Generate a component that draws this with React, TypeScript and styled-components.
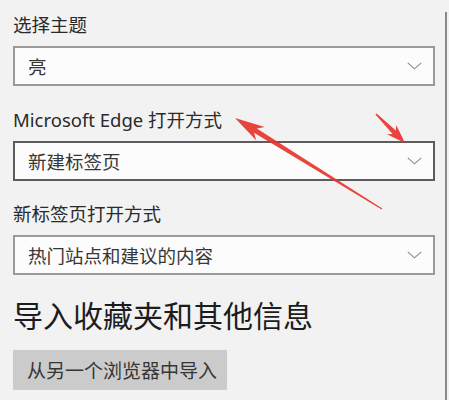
import React from "react";
import styled, { createGlobalStyle } from "styled-components";

const GlobalStyle = createGlobalStyle`
  html, body { margin: 0; padding: 0; }
  body {
    background: #f2f2f2;
    font-family: "Noto Sans", "Noto Sans CJK SC", sans-serif;
    overflow: hidden;
  }
`;

const Page = styled.div`
  position: relative;
  width: 449px;
  height: 400px;
  display: flex;
  background: #f2f2f2;
  overflow: hidden;
`;

const Content = styled.div`
  width: 422px;
  padding: 13px 0 0 13px;
  display: flex;
  flex-direction: column;
`;

const ScrollTrack = styled.div`
  margin: 12px 0 0 10px;
  width: 2px;
  flex: none;
  background: #8a8a8a;
`;

const Section = styled.div`
  display: flex;
  flex-direction: column;
  margin-bottom: ${(p: { $gap: number }) => p.$gap}px;
`;

const Label = styled.div`
  font-size: 18.5px;
  line-height: 24px;
  height: 24px;
  color: #2a2a2a;
  margin-bottom: 9px;
  white-space: nowrap;
`;

const Select = styled.div<{ $active?: boolean }>`
  box-sizing: border-box;
  height: 40px;
  width: 422px;
  border: 2px solid ${(p) => (p.$active ? "#5c5c5c" : "#9a9a9a")};
  background: #fcfcfc;
  display: flex;
  align-items: center;
  justify-content: space-between;
  padding: 0 11px 0 13px;
`;

const SelectText = styled.span`
  font-size: 18.5px;
  color: #363636;
  white-space: nowrap;
`;

const Heading = styled.div`
  font-size: 30px;
  line-height: 40px;
  color: #1c1c1c;
  margin-bottom: 14px;
  white-space: nowrap;
`;

const Button = styled.div`
  box-sizing: border-box;
  width: 214px;
  height: 40px;
  background: #cbcbcb;
  display: flex;
  align-items: center;
  padding-left: 14px;
  font-size: 19px;
  color: #363636;
  white-space: nowrap;
`;

const Overlay = styled.svg`
  position: absolute;
  left: 0;
  top: 0;
  pointer-events: none;
`;

const Chevron = () => (
  <svg width="15" height="8" viewBox="0 0 15 8">
    <polyline points="0.8,0.8 7.5,6.8 14.2,0.8" fill="none" stroke="#8c8c8c" strokeWidth="1.1" />
  </svg>
);

function arrowPoints(tx: number, ty: number, hx: number, hy: number, headLen: number, headHalf: number, tailW: number, shaftW: number) {
  const dx = hx - tx;
  const dy = hy - ty;
  const len = Math.hypot(dx, dy);
  const ux = dx / len;
  const uy = dy / len;
  const nx = -uy;
  const ny = ux;
  const bx = hx - ux * headLen;
  const by = hy - uy * headLen;
  const nxp = hx - ux * headLen * 0.8;
  const nyp = hy - uy * headLen * 0.8;
  const pts = [
    [tx + nx * tailW, ty + ny * tailW],
    [nxp + nx * shaftW, nyp + ny * shaftW],
    [bx + nx * headHalf, by + ny * headHalf],
    [hx, hy],
    [bx - nx * headHalf, by - ny * headHalf],
    [nxp - nx * shaftW, nyp - ny * shaftW],
    [tx - nx * tailW, ty - ny * tailW],
  ];
  return pts.map((p) => p.map((v) => v.toFixed(1)).join(",")).join(" ");
}

const arrow1 = arrowPoints(382, 209, 235, 118, 30, 8, 0.6, 2.6);
const arrow2 = arrowPoints(376, 114, 405, 143, 19, 6.5, 0.8, 2.4);

export default function App() {
  return (
    <>
      <GlobalStyle />
      <Page>
        <Content>
          <Section $gap={22}>
            <Label>选择主题</Label>
            <Select>
              <SelectText>亮</SelectText>
              <Chevron />
            </Select>
          </Section>
          <Section $gap={21}>
            <Label>Microsoft Edge 打开方式</Label>
            <Select $active>
              <SelectText>新建标签页</SelectText>
              <Chevron />
            </Select>
          </Section>
          <Section $gap={21}>
            <Label>新标签页打开方式</Label>
            <Select>
              <SelectText>热门站点和建议的内容</SelectText>
              <Chevron />
            </Select>
          </Section>
          <Heading>导入收藏夹和其他信息</Heading>
          <Button>从另一个浏览器中导入</Button>
        </Content>
        <ScrollTrack />
        <Overlay width="449" height="400" viewBox="0 0 449 400">
          <polygon points={arrow1} fill="#e8342e" opacity="0.92" />
          <polygon points={arrow2} fill="#e8342e" opacity="0.92" />
        </Overlay>
      </Page>
    </>
  );
}
